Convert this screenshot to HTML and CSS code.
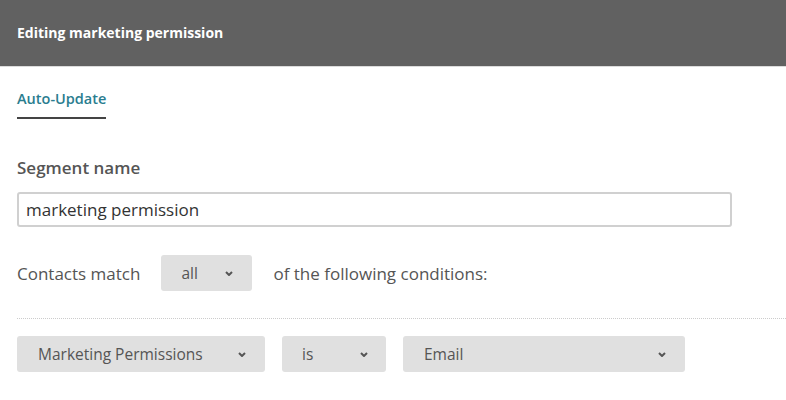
FILE: index.html
```html
<!DOCTYPE html>
<html>
<head>
<meta charset="utf-8">
<link rel="stylesheet" href="styles.css">
</head>
<body>
<header class="header"><h1 class="title">Editing marketing permission</h1></header>
<main class="content">
  <nav class="tabs"><span class="tab">Auto-Update</span></nav>
  <label class="label">Segment name</label>
  <div class="input">marketing permission</div>
  <div class="match-row">
    <span class="text">Contacts match</span>
    <div class="select select-all"><span>all</span><svg class="chev" viewBox="0 0 8 5"><path d="M1 1l3 3 3-3" /></svg></div>
    <span class="text">of the following conditions:</span>
  </div>
  <div class="divider"></div>
  <div class="cond-row">
    <div class="select select-field"><span>Marketing Permissions</span><svg class="chev" viewBox="0 0 8 5"><path d="M1 1l3 3 3-3" /></svg></div>
    <div class="select select-op"><span>is</span><svg class="chev" viewBox="0 0 8 5"><path d="M1 1l3 3 3-3" /></svg></div>
    <div class="select select-val"><span>Email</span><svg class="chev" viewBox="0 0 8 5"><path d="M1 1l3 3 3-3" /></svg></div>
  </div>
</main>
</body>
</html>
```
FILE: styles.css
```css
* { box-sizing: border-box; }
html, body { margin: 0; padding: 0; background: #fff; }
body { font-family: "Open Sans", "Noto Sans", sans-serif; color: #555; }
.header {
  height: 67px;
  background: #616161;
  border-bottom: 1px solid #dcdcdc;
  display: flex;
  align-items: center;
  padding-left: 17px;
}
.title { margin: 0; font-size: 14px; font-weight: 700; color: #fff; padding-bottom: 1px; }
.content { padding-left: 17px; }
.tabs { padding-top: 22px; display: flex; }
.tab {
  font-size: 14.5px; color: #2a7d8f; font-weight: 600;
  padding-bottom: 8px; border-bottom: 2px solid #444; line-height: 20px;
}
.label { display: block; margin-top: 38px; font-size: 17px; font-weight: 600; color: #555; line-height: 22px; }
.input {
  margin-top: 13px; width: 715px; height: 35px; border: 2px solid #d0d0d0; border-radius: 3px;
  padding-left: 7px; display: flex; align-items: center; font-size: 17px; color: #333;
}
.match-row { display: flex; align-items: center; margin-top: 28px; height: 36px; }
.text { font-size: 17px; color: #555; }
.select {
  background: #e0e0e0; border-radius: 3px; height: 36px; display: flex; align-items: center;
  justify-content: space-between; font-size: 15.5px; color: #555;
}
.chev { width: 8px; height: 5px; fill: none; stroke: #555; stroke-width: 2; }
.select-all { width: 91px; margin: 0 21px 0 21px; padding: 0 19px 0 20px; }
.divider { margin-top: 27px; border-top: 1px dotted #ccc; }
.cond-row { display: flex; gap: 17px; margin-top: 17px; }
.select-field { width: 248px; padding: 0 19px 0 21px; }
.select-op { width: 104px; padding: 0 18px 0 20px; }
.select-val { width: 282px; padding: 0 19px 0 21px; }
```
